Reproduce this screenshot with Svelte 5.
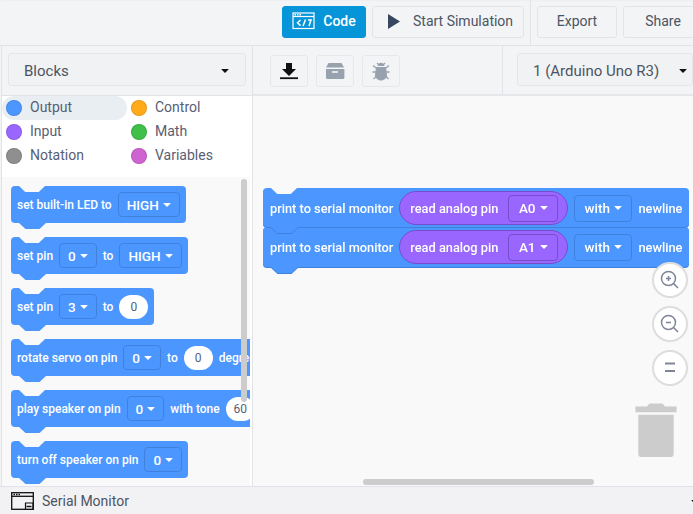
<script>
  const cats = [
    { name: 'Output', color: '#4c97ff', active: true },
    { name: 'Control', color: '#ffab19' },
    { name: 'Input', color: '#9966ff' },
    { name: 'Math', color: '#40bf4a' },
    { name: 'Notation', color: '#8f8f8f' },
    { name: 'Variables', color: '#cf63cf' }
  ];
  const T = (v) => ({ k: 't', v });
  const D = (v) => ({ k: 'd', v });
  const N = (v) => ({ k: 'n', v });
  const palette = [
    [T('set built-in LED to'), D('HIGH')],
    [T('set pin'), D('0'), T('to'), D('HIGH')],
    [T('set pin'), D('3'), T('to'), N('0')],
    [T('rotate servo on pin'), D('0'), T('to'), N('0'), T('degrees')],
    [T('play speaker on pin'), D('0'), T('with tone'), N('60')],
    [T('turn off speaker on pin'), D('0')]
  ];
  const printBlock = (pin) => [
    T('print to serial monitor'),
    { k: 'r', v: [T('read analog pin'), D(pin)] },
    D('with'),
    T('newline')
  ];
  const program = [printBlock('A0'), printBlock('A1')];
</script>

{#snippet parts(list)}
  {#each list as p}
    {#if p.k === 't'}
      <span class="label">{p.v}</span>
    {:else if p.k === 'd'}
      <span class="dd">{p.v}<i class="caret"></i></span>
    {:else if p.k === 'n'}
      <span class="num">{p.v}</span>
    {:else}
      <span class="reporter">{@render parts(p.v)}</span>
    {/if}
  {/each}
{/snippet}

<div class="app">
  <header class="top">
    <button class="btn code">
      <svg width="24" height="18" viewBox="0 0 24 18" fill="none" stroke="#fff">
        <rect x="1" y="1" width="21" height="15.5" stroke-width="1.2" />
        <path d="M1 4.5h21" stroke-width="1.2" />
        <path d="M2.5 2.7h1.5M5 2.7h1.5M7.5 2.7h1.5" stroke-width="1.4" />
        <path d="M8.5 8l-3 2.8 3 2.8M11 14l2.5-6.5M16 8h3l-2 6" stroke-width="1.5" />
      </svg>
      Code
    </button>
    <button class="btn sim">
      <svg width="12" height="15" viewBox="0 0 12 15"><path d="M0 0l12 7.5L0 15z" fill="#36475f" /></svg>
      Start Simulation
    </button>
    <span class="vline"></span>
    <button class="btn export">Export</button>
    <button class="btn share">Share</button>
  </header>

  <div class="main">
    <aside class="side">
      <div class="side-head">
        <div class="select blocks">Blocks<i class="caret dark"></i></div>
      </div>
      <ul class="cats">
        {#each cats as c}
          <li class:active={c.active}><i class="dot" style="background:{c.color}"></i>{c.name}</li>
        {/each}
      </ul>
      <div class="palette">
        {#each palette as b}
          <div class="block">{@render parts(b)}</div>
        {/each}
        <span class="vscroll"></span>
      </div>
    </aside>

    <section class="stage">
      <div class="tools">
        <button class="tool">
          <svg width="20" height="17" viewBox="0 0 20 17"><path d="M7 0h6v6h4l-7 7-7-7h4z" fill="#111" /><path d="M1 15.2h18" stroke="#111" stroke-width="1.8" /></svg>
        </button>
        <button class="tool">
          <svg width="20" height="16" viewBox="0 0 20 16" fill="#98a2ae"><path d="M3.5 0h13L19 4.5H1z" /><path d="M1 6h18.400v8.500a1.500 1.500 0 0 1-1.500 1.500H2.500A1.500 1.500 0 0 1 1 14.500z" /><path d="M7 9h6" stroke="#f3f4f6" stroke-width="1.600" /></svg>
        </button>
        <button class="tool">
          <svg width="18" height="20" viewBox="0 0 18 20" fill="#98a2ae"><path d="M5.500 5C6 2.800 7.300 1.800 9 1.800S12 2.800 12.500 5z" /><path d="M4 6h10L15 14c0 3-3 5.500-6 5.500S3 17 3 14z" /><path d="M5 2l2 2M13 2l-2 2M4 7L1 4.500M14 7l3-2.500M4 11H.5M14 11h3.500M4.500 15L1.500 18M13.500 15l3 3" stroke="#98a2ae" stroke-width="1.300" fill="none" /></svg>
        </button>
        <span class="vline tall"></span>
        <div class="select device">1 (Arduino Uno R3)<i class="caret dark"></i></div>
      </div>

      <div class="canvas">
        <div class="stack">
          {#each program as b}
            <div class="block">{@render parts(b)}</div>
          {/each}
        </div>
        <div class="zooms">
          <button class="zoom" aria-label="Zoom in">
            <svg width="20" height="20" viewBox="0 0 20 20" fill="none" stroke="#7f8599" stroke-width="1.500"><circle cx="8.500" cy="8.500" r="7" /><path d="M13.500 13.500l4.500 4.500M6 8.500h5M8.500 6v5" /></svg>
          </button>
          <button class="zoom" aria-label="Zoom out">
            <svg width="20" height="20" viewBox="0 0 20 20" fill="none" stroke="#7f8599" stroke-width="1.500"><circle cx="8.500" cy="8.500" r="7" /><path d="M13.500 13.500l4.500 4.500M6 8.500h5" /></svg>
          </button>
          <button class="zoom" aria-label="Reset zoom">
            <svg width="20" height="20" viewBox="0 0 20 20" fill="none" stroke="#7f8599" stroke-width="2.200"><path d="M0 5.500h10M0 13h10" transform="translate(5 0)" /></svg>
          </button>
        </div>
        <svg class="trash" width="42" height="54" viewBox="0 0 42 55" fill="#ccc"><path d="M12 3.500C13 1 15 .5 16 .5h10c1 0 3 .5 4 3h12v6H0v-6z" /><path d="M3 12h36v40a3 3 0 0 1-3 3H6a3 3 0 0 1-3-3z" /></svg>
        <span class="hscroll"></span>
      </div>
    </section>
  </div>

  <footer class="serial">
    <svg width="23" height="18" viewBox="0 0 23 18" fill="none" stroke="#111">
      <rect x=".7" y=".7" width="21.600" height="16.600" stroke-width="1.300" />
      <path d="M.7 4.300h21.600" stroke-width="1.300" />
      <path d="M2.500 2.500h1.500M5 2.500h1.500M7.500 2.500h1.500" stroke-width="1.500" />
      <path d="M14.500 11h7.500v6.500h-7.500z" stroke-width="1.200" />
      <path d="M15.500 14.500h5" stroke-width="1.500" />
    </svg>
    <span>Serial Monitor</span>
    <i class="caret dark end"></i>
  </footer>
</div>

<style>
  :global(body) {
    margin: 0;
    background: #f3f4f6;
  }
  .app {
    width: 693px;
    height: 514px;
    overflow: hidden;
    display: flex;
    flex-direction: column;
    font-family: Roboto, "Liberation Sans", sans-serif;
    color: #4b5563;
  }
  button {
    font: inherit;
    color: inherit;
    padding: 0;
    cursor: pointer;
  }
  .top {
    flex: none;
    height: 46px;
    box-sizing: border-box;
    padding: 6px 0 0 282px;
    display: flex;
    gap: 6px;
    background: #f3f4f6;
    border-bottom: 1px solid #e1e3e7;
    box-shadow: inset 0 1px 2px #eceef0;
  }
  .btn {
    flex: none;
    height: 32px;
    box-sizing: border-box;
    border: 1px solid #e2e4e8;
    border-radius: 3px;
    background: #f3f4f6;
    font-size: 14px;
    display: flex;
    align-items: center;
    justify-content: center;
    padding-bottom: 2px;
  }
  .code {
    width: 84px;
    gap: 7px;
    background: #0795d9;
    border-color: #0795d9;
    color: #fff;
    font-weight: 500;
  }
  .sim {
    width: 152px;
    gap: 13px;
    justify-content: flex-start;
    padding-left: 15px;
  }
  .export {
    width: 80px;
  }
  .share {
    width: 80px;
  }
  .vline {
    flex: none;
    width: 1px;
    height: 46px;
    margin-top: -6px;
    background: #e1e3e7;
  }
  .main {
    flex: 1;
    min-height: 0;
    display: flex;
  }
  .side {
    flex: none;
    width: 250px;
    margin-left: 1px;
    border-left: 1px solid #e1e3e7;
    border-right: 1px solid #e1e3e7;
    display: flex;
    flex-direction: column;
    background: #fff;
  }
  .side-head {
    flex: none;
    height: 50px;
    box-sizing: border-box;
    padding: 7px 0 0 6px;
    background: #f3f4f6;
    border-bottom: 1px solid #e1e3e7;
  }
  .select {
    box-sizing: border-box;
    height: 33px;
    display: flex;
    align-items: center;
    justify-content: space-between;
    background: #f1f2f4;
    border: 1px solid #e4e6ea;
    border-radius: 3px;
    font-size: 15px;
    padding-top: 2px;
  }
  .blocks {
    width: 238px;
    padding-right: 16px;
    padding-left: 15px;
  }
  .device {
    flex: none;
    width: 176px;
    margin: -2px 0 0 6px;
    padding-right: 5px;
    padding-left: 15px;
  }
  .caret {
    display: inline-block;
    width: 0;
    height: 0;
    border: 4.500px solid transparent;
    border-top: 4.500px solid #fff;
    border-bottom: 0;
    margin-left: 4px;
    border-radius: 1px;
  }
  .caret.dark {
    border-top-color: #111;
  }
  .cats {
    flex: none;
    height: 81px;
    margin: 0;
    padding: 0;
    list-style: none;
    display: grid;
    grid-template-columns: 125px 1fr;
    grid-auto-rows: 24px;
    column-gap: 0;
    font-size: 14px;
    color: #575e75;
  }
  .cats li {
    display: flex;
    align-items: center;
    gap: 8px;
    padding: 0 0 2px 4px;
    box-sizing: border-box;
    line-height: 22px;
  }
  .cats li.active {
    background: #e9eef2;
    border-radius: 12px;
  }
  .dot {
    flex: none;
    width: 16px;
    height: 16px;
    margin-top: 1px;
    border-radius: 50%;
    box-shadow: inset 0 0 0 1px rgba(0, 0, 0, .1);
  }
  .palette {
    position: relative;
    flex: 1;
    min-height: 0;
    overflow: hidden;
    background: #f9f9f9;
    padding: 9px 0 0 9px;
    width: 239px;
    display: flex;
    flex-direction: column;
    align-items: flex-start;
    gap: 14px;
  }
  .block {
    --bg: #f9f9f9;
    position: relative;
    flex: none;
    box-sizing: border-box;
    height: 37px;
    display: inline-flex;
    align-items: center;
    gap: 6px;
    padding: 0 6px;
    background: #4c97ff;
    border-radius: 4px;
    color: #fff;
    font-size: 12px;
    font-weight: 500;
    white-space: nowrap;
  }
  .block::before {
    content: "";
    position: absolute;
    left: 8px;
    top: 0;
    width: 26px;
    height: 6px;
    background: var(--bg);
    clip-path: polygon(0 0, 100% 0, 76% 100%, 24% 100%);
  }
  .block::after {
    content: "";
    position: absolute;
    left: 8px;
    top: 100%;
    width: 27px;
    height: 6px;
    background: #4c97ff;
    clip-path: polygon(0 0, 100% 0, 76% 100%, 24% 100%);
  }
  .label {
    flex: none;
  }
  .dd {
    flex: none;
    box-sizing: border-box;
    height: 25px;
    padding: 0 8px;
    display: inline-flex;
    align-items: center;
    border: 1px solid #3f81dc;
    border-radius: 4px;
    font-size: 13.500px;
  }
  .num {
    flex: none;
    box-sizing: border-box;
    min-width: 29px;
    height: 24px;
    padding: 0 7px;
    display: inline-flex;
    align-items: center;
    justify-content: center;
    background: #fff;
    border-radius: 12px;
    color: #575e75;
    font-weight: 400;
  }
  .reporter {
    flex: none;
    box-sizing: border-box;
    height: 34px;
    padding: 0 9px 0 10px;
    display: inline-flex;
    align-items: center;
    gap: 10px;
    background: #9966ff;
    border: 1px solid #774dcb;
    border-radius: 17px;
  }
  .reporter .dd {
    height: 27px;
    border-color: #774dcb;
  }
  .vscroll {
    position: absolute;
    left: 239px;
    top: 2px;
    width: 6px;
    height: 223px;
    border-radius: 3px;
    background: #ccc;
  }
  .stage {
    flex: 1;
    min-width: 0;
    display: flex;
    flex-direction: column;
  }
  .tools {
    flex: none;
    height: 50px;
    box-sizing: border-box;
    padding: 9px 0 0 17px;
    display: flex;
    gap: 8px;
    background: #f3f4f6;
    border-bottom: 2px solid #e6e7ea;
  }
  .tool {
    flex: none;
    width: 38px;
    height: 32px;
    display: flex;
    align-items: center;
    justify-content: center;
    background: #f3f4f6;
    border: 1px solid #e6e8eb;
    border-radius: 3px;
  }
  .vline.tall {
    height: 48px;
    margin: -9px 0 0 94px;
  }
  .canvas {
    position: relative;
    flex: 1;
    min-height: 0;
    background: #f9f9f9;
    overflow: hidden;
  }
  .stack {
    position: absolute;
    left: 10px;
    top: 92px;
    display: flex;
    flex-direction: column;
  }
  .stack .block {
    display: flex;
    height: 40px;
    padding: 0 7px;
    gap: 6px;
    font-size: 12.800px;
    filter: drop-shadow(0 1px 0 #3f81dc);
  }
  .stack .block:first-child {
    z-index: 2;
    height: 39px;
    padding-top: 1px;
  }
  .stack .dd {
    height: 27px;
    padding: 0 9.500px;
  }
  .zooms {
    position: absolute;
    left: 399px;
    top: 166px;
    display: flex;
    flex-direction: column;
    gap: 8px;
  }
  .zoom {
    box-sizing: border-box;
    width: 36px;
    height: 36px;
    display: flex;
    align-items: center;
    justify-content: center;
    background: #fff;
    border: 2px solid #ddd;
    border-radius: 50%;
  }
  .trash {
    position: absolute;
    left: 382px;
    top: 307px;
  }
  .hscroll {
    position: absolute;
    left: 110px;
    top: 383px;
    width: 231px;
    height: 6px;
    border-radius: 3px;
    background: #ccc;
  }
  .serial {
    flex: none;
    height: 28px;
    box-sizing: border-box;
    padding: 0 0 0 11px;
    display: flex;
    align-items: center;
    gap: 8px;
    background: #f2f1f3;
    border-top: 1px solid #dfe2e8;
    font-size: 14px;
    position: relative;
  }
  .end {
    position: absolute;
    right: -6px;
    top: 13px;
  }
</style>
